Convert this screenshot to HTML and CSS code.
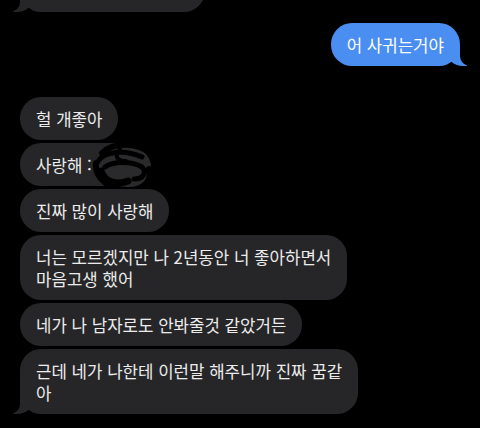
FILE: index.html
```html
<!DOCTYPE html>
<html lang="ko">
<head>
  <meta charset="UTF-8">
  <title>Messages</title>
  <link rel="stylesheet" href="styles.css">
</head>
<body>

  <div class="chat">
    <!-- previous message, cut off at the top -->
    <div class="msg them tail cut"></div>

    <div class="msg me tail">어 사귀는거야</div>

    <div class="group">
      <div class="msg them">헐 개좋아</div>
      <div class="msg them scribbled">
        사랑해 :<span class="hidden-bit"></span>
        <svg class="scribble" width="62" height="52" viewBox="0 0 62 52">
          <ellipse cx="33" cy="26" rx="26" ry="22" fill="#2a2a2c"/>
          <path d="M10 12 C 20 2, 44 0, 58 12" stroke="#000" stroke-width="6" fill="none" stroke-linecap="round"/>
          <path d="M4 22 C 2 38, 20 50, 38 49 C 54 48, 60 38, 57 28" stroke="#000" stroke-width="6" fill="none" stroke-linecap="round"/>
          <path d="M5 22 C 11 10, 32 8, 50 16" stroke="#000" stroke-width="5" fill="none" stroke-linecap="round"/>
          <path d="M13 26 C 21 20, 40 20, 50 26 C 55 31, 52 38, 42 38" stroke="#000" stroke-width="5" fill="none" stroke-linecap="round"/>
          <path d="M9 30 C 13 42, 26 44, 36 40" stroke="#000" stroke-width="7" fill="none" stroke-linecap="round"/>
          <path d="M28 8 C 22 14, 24 20, 34 20" stroke="#000" stroke-width="4" fill="none" stroke-linecap="round"/>
        </svg>
      </div>
      <div class="msg them">진짜 많이 사랑해</div>
      <div class="msg them">너는 모르겠지만 나 2년동안 너 좋아하면서<br>마음고생 했어</div>
      <div class="msg them">네가 나 남자로도 안봐줄것 같았거든</div>
      <div class="msg them tail">근데 네가 나한테 이런말 해주니까 진짜 꿈같<br>아</div>
    </div>
  </div>

</body>
</html>
```

FILE: styles.css
```css
* {
  box-sizing: border-box;
}

body {
  margin: 0;
  background: #000;
  font-family: "Noto Sans CJK KR", "Noto Sans", sans-serif;
  overflow: hidden;
}

.chat {
  display: flex;
  flex-direction: column;
  align-items: flex-start;
  padding: 0 20px;
}

.group {
  display: flex;
  flex-direction: column;
  align-items: flex-start;
  gap: 3px;
  margin-top: 31px;
}

.msg {
  position: relative;
  padding: 10.5px 16px;
  border-radius: 21px;
  font-size: 16.8px;
  line-height: 22px;
  color: #ececec;
  white-space: nowrap;
}

.them {
  background: #262628;
}

.me {
  align-self: flex-end;
  background: #4a8ef2;
  color: #fff;
  margin-top: 11px;
}

.cut {
  width: 185px;
  height: 43px;
  margin-top: -31px;
}

/* bubble tails */
.them.tail::before,
.them.tail::after,
.me.tail::before,
.me.tail::after {
  content: "";
  position: absolute;
  bottom: 0;
  height: 20px;
}

.them.tail::before {
  left: -7px;
  width: 20px;
  background: #262628;
  border-bottom-right-radius: 16px 14px;
}

.them.tail::after {
  left: -26px;
  width: 26px;
  background: #000;
  border-bottom-right-radius: 10px;
}

.me.tail::before {
  right: -7px;
  width: 20px;
  background: #4a8ef2;
  border-bottom-left-radius: 16px 14px;
}

.me.tail::after {
  right: -26px;
  width: 26px;
  background: #000;
  border-bottom-left-radius: 10px;
}

.scribbled {
  padding-right: 14px;
}

.hidden-bit {
  display: inline-block;
  width: 40px;
}

.scribble {
  position: absolute;
  left: 72px;
  top: -2px;
}
```
